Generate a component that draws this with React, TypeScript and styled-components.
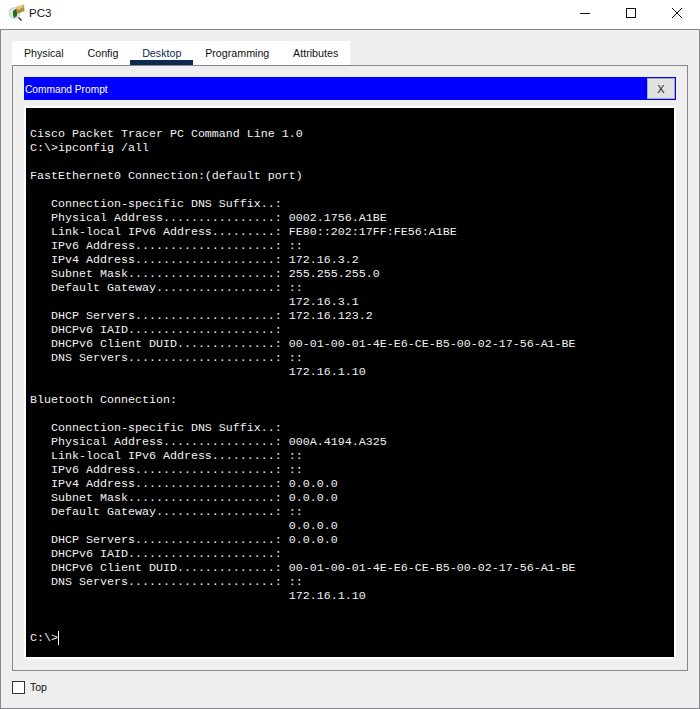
import React from 'react';
import styled, { createGlobalStyle } from 'styled-components';

const Global = createGlobalStyle`
  html, body {
    margin: 0;
    padding: 0;
    background: #fff;
  }
  * {
    box-sizing: border-box;
  }
`;

const Window = styled.div`
  width: 700px;
  height: 709px;
  display: flex;
  flex-direction: column;
  font-family: "Liberation Sans", Arial, sans-serif;
  color: #111;
  overflow: hidden;
`;

const TitleBar = styled.div`
  height: 29px;
  flex: none;
  display: flex;
  align-items: center;
  background: #fff;
  padding: 0 0 3px 8px;
`;

const TitleText = styled.span`
  font-size: 11.5px;
  margin-left: 3px;
  flex: 1;
`;

const WinButton = styled.div`
  width: 46px;
  height: 26px;
  display: flex;
  align-items: center;
  justify-content: center;
`;

const Body = styled.div`
  flex: 1;
  display: flex;
  flex-direction: column;
  background: #efefef;
  border: 1px solid #85878c;
  padding: 11px 11px 0 11px;
`;

const TabBar = styled.div`
  display: flex;
  align-self: flex-start;
  height: 24px;
  background: #fff;
`;

const Tab = styled.div<{ $active?: boolean }>`
  height: 24px;
  padding: 0 11.9px;
  font-size: 10.7px;
  line-height: 25px;
  color: ${(p) => (p.$active ? '#0f2a4f' : '#111')};
  border-bottom: 5px solid ${(p) => (p.$active ? '#0f2a4f' : 'transparent')};
`;

const Panel = styled.div`
  height: 606px;
  width: 676px;
  border: 1px solid #85878c;
  padding: 11px 11px 0 11px;
  display: flex;
  flex-direction: column;
`;

const PromptBar = styled.div`
  height: 23px;
  flex: none;
  display: flex;
  align-items: center;
  justify-content: space-between;
  background: #0000ff;
  padding: 1px 1px 1px 0;
`;

const PromptTitle = styled.span`
  color: #fff;
  font-size: 10.2px;
  line-height: 14px;
  margin: 2px 0 0 1px;
`;

const CloseButton = styled.div`
  width: 28px;
  height: 21px;
  background: #e1e1e1;
  border: 1px solid #adadad;
  font-size: 11px;
  line-height: 20px;
  text-align: center;
  color: #222;
`;

const Frame = styled.div`
  margin-top: 6px;
  height: 553px;
  background: #000;
  border: 2px solid #fff;
  padding: 19px 4px 0 4px;
`;

const Terminal = styled.pre`
  margin: 0;
  color: #f2f2f2;
  font-family: "Liberation Mono", "Courier New", monospace;
  font-size: 11.67px;
  line-height: 14px;
`;

const Caret = styled.span`
  display: inline-block;
  width: 1px;
  height: 14px;
  background: #fff;
  vertical-align: top;
`;

const Footer = styled.div`
  flex: 1;
  display: flex;
  align-items: center;
  padding-bottom: 5px;
`;

const Check = styled.div`
  width: 13px;
  height: 13px;
  background: #fff;
  border: 1px solid #333;
`;

const CheckLabel = styled.span`
  font-size: 10.5px;
  margin-left: 5px;
`;

const AppIcon = () => (
  <svg width="18" height="18" viewBox="0 0 18 18">
    <circle cx="6.5" cy="9" r="5.5" fill="#dfe2df" stroke="#b5b8b5" strokeWidth="0.6" />
    <path d="M5 7 L9 4 L9 12 L6 14 L5 11 Z" fill="#1f6e22" />
    <path d="M8 3 L16 0.5 L16.5 7 L9 10 Z" fill="#b98f48" />
    <path d="M8 3 L16 0.5 L15 3.5 L9 6 Z" fill="#e3c584" />
    <path d="M10.5 13.5 L13.5 16.5" stroke="#333" strokeWidth="1.4" />
  </svg>
);

const terminalText = `Cisco Packet Tracer PC Command Line 1.0
C:\\>ipconfig /all

FastEthernet0 Connection:(default port)

   Connection-specific DNS Suffix..:
   Physical Address................: 0002.1756.A1BE
   Link-local IPv6 Address.........: FE80::202:17FF:FE56:A1BE
   IPv6 Address....................: ::
   IPv4 Address....................: 172.16.3.2
   Subnet Mask.....................: 255.255.255.0
   Default Gateway.................: ::
                                     172.16.3.1
   DHCP Servers....................: 172.16.123.2
   DHCPv6 IAID.....................:
   DHCPv6 Client DUID..............: 00-01-00-01-4E-E6-CE-B5-00-02-17-56-A1-BE
   DNS Servers.....................: ::
                                     172.16.1.10

Bluetooth Connection:

   Connection-specific DNS Suffix..:
   Physical Address................: 000A.4194.A325
   Link-local IPv6 Address.........: ::
   IPv6 Address....................: ::
   IPv4 Address....................: 0.0.0.0
   Subnet Mask.....................: 0.0.0.0
   Default Gateway.................: ::
                                     0.0.0.0
   DHCP Servers....................: 0.0.0.0
   DHCPv6 IAID.....................:
   DHCPv6 Client DUID..............: 00-01-00-01-4E-E6-CE-B5-00-02-17-56-A1-BE
   DNS Servers.....................: ::
                                     172.16.1.10


C:\\>`;

const App: React.FC = () => (
  <Window>
    <Global />
    <TitleBar>
      <AppIcon />
      <TitleText>PC3</TitleText>
      <WinButton>
        <svg width="10" height="10" viewBox="0 0 10 10">
          <path d="M0 5.5 H10" stroke="#111" strokeWidth="1" />
        </svg>
      </WinButton>
      <WinButton>
        <svg width="10" height="10" viewBox="0 0 10 10">
          <rect x="0.5" y="0.5" width="9" height="9" fill="none" stroke="#111" strokeWidth="1" />
        </svg>
      </WinButton>
      <WinButton>
        <svg width="10" height="10" viewBox="0 0 10 10">
          <path d="M0 0 L10 10 M10 0 L0 10" stroke="#111" strokeWidth="1" />
        </svg>
      </WinButton>
    </TitleBar>
    <Body>
      <TabBar>
        <Tab>Physical</Tab>
        <Tab>Config</Tab>
        <Tab $active>Desktop</Tab>
        <Tab>Programming</Tab>
        <Tab>Attributes</Tab>
      </TabBar>
      <Panel>
        <PromptBar>
          <PromptTitle>Command Prompt</PromptTitle>
          <CloseButton>X</CloseButton>
        </PromptBar>
        <Frame>
          <Terminal>
            {terminalText}
            <Caret />
          </Terminal>
        </Frame>
      </Panel>
      <Footer>
        <Check />
        <CheckLabel>Top</CheckLabel>
      </Footer>
    </Body>
  </Window>
);

export default App;
